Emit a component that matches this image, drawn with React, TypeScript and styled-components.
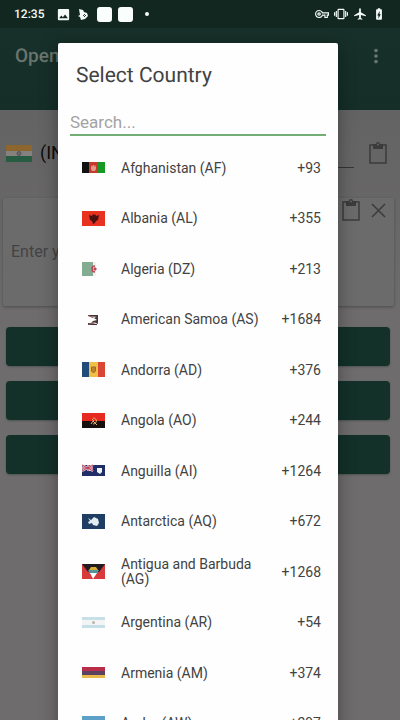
import React from 'react';
import styled, { createGlobalStyle } from 'styled-components';
import {
  MdAirplanemodeActive,
  MdBatteryChargingFull,
  MdImage,
  MdMoreVert,
  MdOutlineVpnKey,
  MdVibration,
} from 'react-icons/md';

const GlobalStyle = createGlobalStyle`
  * { box-sizing: border-box; }
  body {
    margin: 0;
    background: #6e6c6d;
    font-family: Roboto, "Noto Sans", sans-serif;
    text-rendering: geometricPrecision;
  }
  button, input { font: inherit; }
`;

const Screen = styled.div`
  position: relative;
  height: 100vh;
  overflow: hidden;
  background: linear-gradient(#646363 110px, #6e6c6d 330px);
`;

const StatusBar = styled.div`
  display: flex;
  justify-content: space-between;
  align-items: center;
  height: 28px;
  padding: 0 14px;
  background: #122720;
  color: #f4fbf8;
`;

const StatusGroup = styled.div<{ $gap: number }>`
  display: flex;
  align-items: center;
  gap: ${(p) => p.$gap}px;
`;

const Clock = styled.span`
  width: 35px;
  font-size: 12px;
  font-weight: 500;
  line-height: 16px;
  white-space: nowrap;
`;

const AppTile = styled.span`
  width: 15px;
  height: 15px;
  border-radius: 3px;
  background: #fafffd;
`;

const AppTiles = styled.span`
  display: flex;
  gap: 6px;
  margin-left: 2px;
`;

const Dot = styled.span`
  width: 4px;
  height: 4px;
  margin-left: 5px;
  border-radius: 50%;
  background: #f4fbf8;
`;

const AppBar = styled.header`
  display: flex;
  justify-content: space-between;
  height: 82px;
  padding: 16px 13px 0 15px;
  background: linear-gradient(#173029, #152e27);
  color: #69756f;
`;

const AppTitle = styled.h1`
  margin: 0;
  font-size: 19px;
  font-weight: 500;
  line-height: 24px;
`;

const IconButton = styled.button`
  display: flex;
  align-items: center;
  justify-content: center;
  height: 24px;
  padding: 0;
  border: 0;
  background: none;
  color: inherit;
`;

const Content = styled.main`
  display: flex;
  flex-direction: column;
  padding: 27px 10px 0 6px;
  color: #3c3b3b;
`;

const NumberRow = styled.div`
  display: flex;
  align-items: center;
  height: 32px;
`;

const CountryPick = styled.button`
  display: flex;
  align-items: center;
  gap: 8px;
  padding: 0;
  border: 0;
  background: none;
  color: #0c0c0c;
  font-size: 18px;
  line-height: 24px;
`;

const PhoneInput = styled.input`
  flex: 1;
  min-width: 0;
  height: 29px;
  margin-right: 12px;
  border: 0;
  border-bottom: 1px solid #343434;
  background: none;
`;

const MessageCard = styled.section`
  display: flex;
  align-items: flex-start;
  height: 108px;
  margin: 29px -4px 0 -3px;
  padding: 0 4px 0 8px;
  border-radius: 2px;
  background: #6c6b6b;
  box-shadow: 0 1px 3px #4c4c4c;
`;

const MessageInput = styled.textarea`
  flex: 1;
  min-width: 0;
  height: 100%;
  padding: 44px 0 0;
  border: 0;
  resize: none;
  background: none;
  font-family: inherit;
  font-size: 16px;
  line-height: 20px;
  &::placeholder { color: #434343; opacity: 1; }
`;

const CardActions = styled.div`
  display: flex;
  gap: 3px;
`;

const Actions = styled.div`
  display: flex;
  flex-direction: column;
  gap: 15px;
  margin-top: 21px;
`;

const ActionButton = styled.button`
  height: 39px;
  border: 0;
  border-radius: 4px;
  background: #133029;
  box-shadow: 0 1px 2px #4e5552;
`;

const Overlay = styled.div`
  position: absolute;
  inset: 0;
  padding: 43px 62px 0 58px;
`;

const Dialog = styled.section`
  display: flex;
  flex-direction: column;
  padding: 20px 12px 0;
  border-radius: 2px 2px 0 0;
  background: #fefefe;
  box-shadow: 0 3px 18px rgba(0, 0, 0, 0.35);
  color: #424242;
`;

const DialogTitle = styled.h2`
  margin: 0 6px;
  font-size: 21px;
  font-weight: 400;
  line-height: 26px;
`;

const SearchInput = styled.input`
  width: 100%;
  height: 32px;
  margin: 15px 0 7px;
  padding: 5px 0 0;
  border: 0;
  border-bottom: 2px solid #72ae75;
  border-radius: 0;
  outline: 0;
  background: none;
  font-size: 17px;
  &::placeholder { color: #a3a3a3; opacity: 1; }
`;

const CountryList = styled.ul`
  display: grid;
  grid-auto-rows: 50px 51px;
  margin: 0;
  padding: 0 5px 0 12px;
  list-style: none;
`;

const CountryItem = styled.li`
  display: flex;
`;

const CountryRow = styled.button`
  display: flex;
  flex: 1;
  align-items: center;
  padding: 0;
  border: 0;
  background: none;
  color: inherit;
  font-size: 14px;
  line-height: 15px;
  text-align: left;
`;

const FlagIcon = styled.svg`
  flex: none;
  width: 23px;
  height: 16px;
  margin-right: 16px;
`;

const CountryName = styled.span`
  flex: 1;
`;

const DialCode = styled.span`
  width: 57px;
  text-align: right;
`;

const IndiaFlag = () => (
  <svg width="26" height="17" viewBox="0 0 26 17" aria-hidden="true">
    <path fill="#8c662d" d="M0 0h26v6H0z" />
    <path fill="#85817e" d="M0 6h26v5H0z" />
    <path fill="#285c42" d="M0 11h26v6H0z" />
    <circle cx="13" cy="8.5" r="2" fill="#6c6965" stroke="#55545f" />
  </svg>
);

const TouchIcon = () => (
  <svg width="10" height="12" viewBox="0 0 10 12" aria-hidden="true">
    <path fill="currentColor" d="M1 1l4 1 1 2 3 1 1 3-3 3-4 1-1-3-2-1 2-1z" />
    <path stroke="#31453e" strokeWidth="1" d="M5 8l2-2M6 9l2-2" />
  </svg>
);

const ClipboardIcon = () => (
  <svg width="24" height="24" viewBox="0 0 24 24" fill="none" aria-hidden="true">
    <path stroke="currentColor" strokeWidth="1.5" d="M8 4H4v18h16V4h-4" />
    <path fill="currentColor" d="M7 3h3a2 2 0 0 1 4 0h3v5H7z" />
    <circle cx="12" cy="3.500" r="1" fill="#686767" />
  </svg>
);

const CrossIcon = () => (
  <svg width="24" height="24" viewBox="0 0 24 24" fill="none" aria-hidden="true">
    <path stroke="currentColor" strokeWidth="1.5" d="M6 6l13 13M19 6L6 19" />
  </svg>
);

const flags: Record<string, React.ReactNode> = {
  AF: (
    <>
      <path fill="#111" d="M0 2h8v11H0z" />
      <path fill="#c9392b" d="M7 2h9v11H7z" />
      <path fill="#159a24" d="M16 2h7v11h-7z" />
      <path fill="#e09c8c" d="M9 5l1 2 1-2h1l1 2 1-2v4l-1 2h-3L9 9z" />
    </>
  ),
  AL: (
    <>
      <path fill="#e8321f" d="M0 0h23v15H0z" />
      <path fill="#491010" d="M7 4l3 1 1-2 1 1 1-1 1 2 3-1-1 5-2 1-1 2-2 1-1-3-2-1z" />
    </>
  ),
  DZ: (
    <>
      <path fill="#84ac93" d="M0 1h11v14H0z" />
      <path fill="#f5f1f1" d="M11 1h3v14h-3z" />
      <path fill="none" stroke="#bd4450" strokeWidth="1.500" d="M13 5a3 3 0 1 0 0 6" />
      <path fill="#bd4450" d="M11 8l2-2 1 1h1l-1 1 1 1h-1l-1 1z" />
    </>
  ),
  AS: (
    <>
      <path fill="#3c3541" d="M6 3h10v2L6 4zM6 11l9 1v1H6z" />
      <path fill="#96504a" d="M6 3l6 2-1 1-5-2zM6 12l6-2 1 1-6 2z" />
      <path fill="#463832" d="M16 4v8l-4-2-3 1 2-2 4-1-3-2z" />
    </>
  ),
  AD: (
    <>
      <path fill="#214b78" d="M0 0h8v15H0z" />
      <path fill="#f1bf46" d="M7 0h9v15H7z" />
      <path fill="#d94734" d="M16 0h7v15h-7z" />
      <path fill="#bb852e" stroke="#9a6931" d="M9.500 5h4v4l-2 2-2-2z" />
    </>
  ),
  AO: (
    <>
      <path fill="#e62a20" d="M0 0h23v8H0z" />
      <path fill="#18100e" d="M0 8h23v7H0z" />
      <path fill="none" stroke="#e5b36d" d="M11 5c5 0 4 6 0 6M9 11l2-3 4 4M10 6l2 2" />
    </>
  ),
  AI: (
    <>
      <path fill="#202d67" d="M0 2h23v11H0z" />
      <path stroke="#e6dce4" strokeWidth="2" d="M0 2l11 6M11 2L0 8M6 2v6M0 5h11" />
      <path stroke="#bd3e56" strokeWidth="1" d="M0 2l11 6M11 2L0 8M6 2v6M0 5h11" />
      <path fill="#eef4f3" d="M15 5h5v4l-2 2-3-2z" />
    </>
  ),
  AQ: (
    <>
      <path fill="#203e63" d="M0 0h23v15H0z" />
      <path fill="#e2edf2" d="M6 4l3 2 3-3 4 2 1 4-2 3-4-1-1-2-3 1-1-2 2-1z" />
    </>
  ),
  AG: (
    <>
      <path fill="#d8393a" d="M0 0h23v15H0z" />
      <path fill="#211b20" d="M0 0h23L17 8H6z" />
      <path fill="#d9ad35" d="M7 6l2-3h5l2 3z" />
      <path fill="#55939b" d="M6 6h11l-2 4H8z" />
      <path fill="#fff" d="M8 9h7l-4 6z" />
    </>
  ),
  AR: (
    <>
      <path fill="#c7e0e8" d="M0 2h23v3H0zM0 10h23v3H0z" />
      <path fill="#f3f5f4" d="M0 5h23v5H0z" />
      <circle cx="11.500" cy="7.500" r="1.500" fill="#b5b8a8" />
    </>
  ),
  AM: (
    <>
      <path fill="#b82d4a" d="M0 2h23v4H0z" />
      <path fill="#5a4260" d="M0 6h23v4H0z" />
      <path fill="#e9b94c" d="M0 10h23v3H0z" />
    </>
  ),
  AW: (
    <>
      <path fill="#5ca0c8" d="M0 0h23v15H0z" />
      <path fill="#e5d96e" d="M0 9h23v1H0zM0 11h23v1H0z" />
    </>
  ),
};

const countries = [
  { name: 'Afghanistan', iso: 'AF', code: '+93' },
  { name: 'Albania', iso: 'AL', code: '+355' },
  { name: 'Algeria', iso: 'DZ', code: '+213' },
  { name: 'American Samoa', iso: 'AS', code: '+1684' },
  { name: 'Andorra', iso: 'AD', code: '+376' },
  { name: 'Angola', iso: 'AO', code: '+244' },
  { name: 'Anguilla', iso: 'AI', code: '+1264' },
  { name: 'Antarctica', iso: 'AQ', code: '+672' },
  { name: 'Antigua and Barbuda', iso: 'AG', code: '+1268' },
  { name: 'Argentina', iso: 'AR', code: '+54' },
  { name: 'Armenia', iso: 'AM', code: '+374' },
  { name: 'Aruba', iso: 'AW', code: '+297' },
];

export default function App() {
  return (
    <>
      <GlobalStyle />
      <Screen>
        <StatusBar>
          <StatusGroup $gap={7}>
            <Clock>12:35</Clock>
            <MdImage size={15} />
            <TouchIcon />
            <AppTiles>
              <AppTile />
              <AppTile />
            </AppTiles>
            <Dot />
          </StatusGroup>
          <StatusGroup $gap={5}>
            <MdOutlineVpnKey size={14} />
            <MdVibration size={14} />
            <MdAirplanemodeActive size={14} />
            <MdBatteryChargingFull size={14} />
          </StatusGroup>
        </StatusBar>
        <AppBar>
          <AppTitle>Open</AppTitle>
          <IconButton aria-label="More options">
            <MdMoreVert size={22} />
          </IconButton>
        </AppBar>
        <Content>
          <NumberRow>
            <CountryPick>
              <IndiaFlag />
              (IN)
            </CountryPick>
            <PhoneInput type="tel" aria-label="Phone number" />
            <IconButton aria-label="Paste number">
              <ClipboardIcon />
            </IconButton>
          </NumberRow>
          <MessageCard>
            <MessageInput aria-label="Message" placeholder="Enter your" />
            <CardActions>
              <IconButton aria-label="Paste message">
                <ClipboardIcon />
              </IconButton>
              <IconButton aria-label="Clear message">
                <CrossIcon />
              </IconButton>
            </CardActions>
          </MessageCard>
          <Actions>
            <ActionButton aria-label="Send" />
            <ActionButton aria-label="Share" />
            <ActionButton aria-label="Copy" />
          </Actions>
        </Content>
        <Overlay>
          <Dialog role="dialog" aria-labelledby="dialog-title">
            <DialogTitle id="dialog-title">Select Country</DialogTitle>
            <SearchInput type="text" aria-label="Search countries" placeholder="Search..." />
            <CountryList>
              {countries.map(({ name, iso, code }) => (
                <CountryItem key={iso}>
                  <CountryRow>
                    <FlagIcon viewBox="0 0 23 16" aria-hidden="true">
                      {flags[iso]}
                    </FlagIcon>
                    <CountryName>
                      {name} ({iso})
                    </CountryName>
                    <DialCode>{code}</DialCode>
                  </CountryRow>
                </CountryItem>
              ))}
            </CountryList>
          </Dialog>
        </Overlay>
      </Screen>
    </>
  );
}
